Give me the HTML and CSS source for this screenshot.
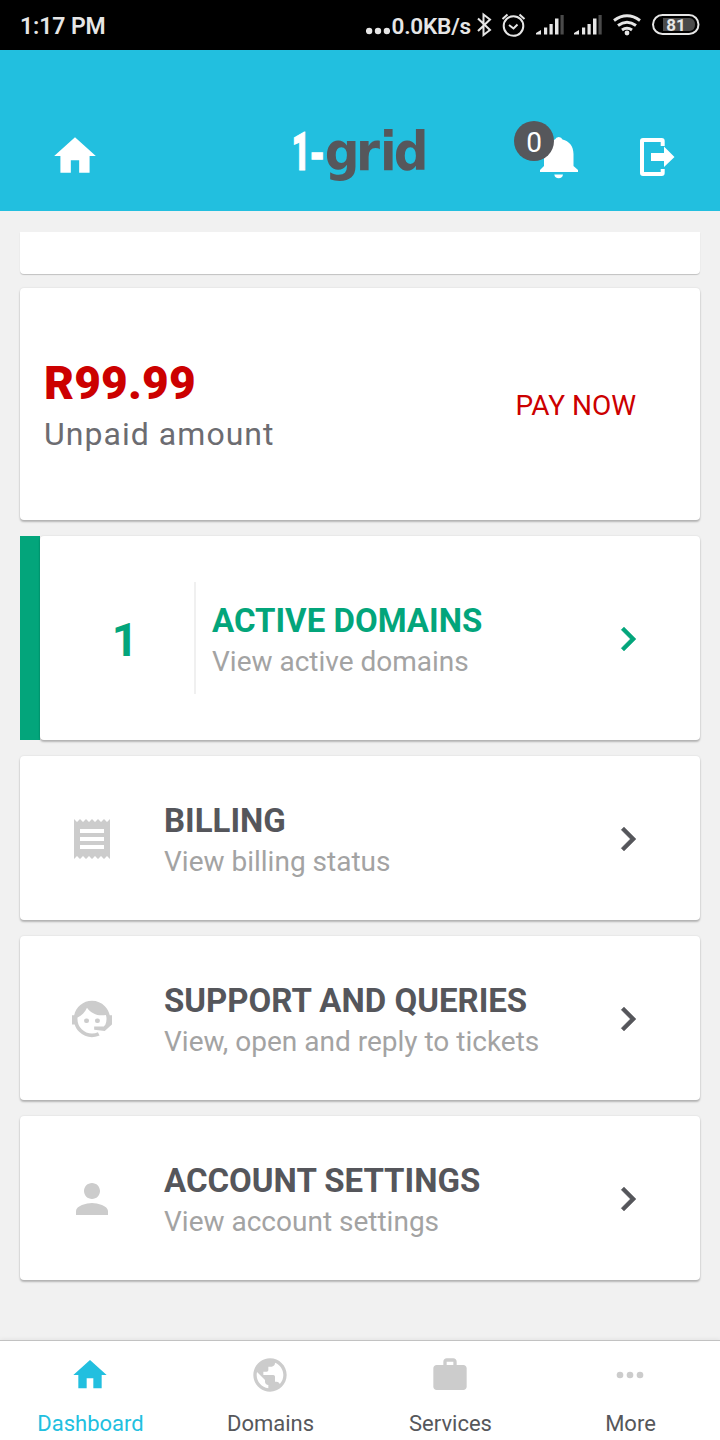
FILE: index.html
```html
<!DOCTYPE html>
<html lang="en">
<head>
<meta charset="utf-8">
<title>1-grid Dashboard</title>
<link rel="stylesheet" href="styles.css">
</head>
<body>
<div class="app">
  <div class="status">
    <span class="clock">1:17 PM</span>
    <div class="status-right">
      <svg class="dots" width="24" height="8" viewBox="0 0 24 8"><circle cx="3.1" cy="4" r="3.2"/><circle cx="12" cy="4" r="3.2"/><circle cx="20.9" cy="4" r="3.2"/></svg>
      <span class="rate">0.0KB/s</span>
      <svg class="status-icons" width="230" height="50" viewBox="470 0 230 50">
        <path class="line" d="M478 18.5l12 11.5-6.5 5V14.500l6.500 5-12 11.500"/>
        <g class="line"><circle cx="513.500" cy="26" r="9.800"/><path d="M509 25l4.500 3.500 4-4M502.500 19l5-4.500M524.500 19l-5-4.500"/></g>
        <g id="signal"><path d="M536 34.500v-1.500l5-3v4.500zM544 27.500h3.200v7H544zM549.500 24h3.200v10.500h-3.200zM555 18.500h3.500v16H555z"/><path class="dim" d="M560.500 15h3.200v19.500h-3.200z"/></g>
        <use href="#signal" x="38"/>
        <g class="wifi"><path d="M614 20.500q13-9.500 26 0M618 25.500q9-6.500 18 0M622 30q5-3.500 10 0"/></g>
        <circle cx="627" cy="33" r="2.400"/>
        <rect class="line" x="653" y="15" width="45.500" height="19" rx="9.500"/>
        <path class="dim" d="M663 18h27q5 1 5 6.500t-5 6.500h-27z"/>
        <text x="676" y="31" text-anchor="middle">81</text>
      </svg>
    </div>
  </div>

  <header class="header">
    <svg class="home" width="50" height="50" viewBox="0 0 24 24"><path d="M10 20v-6h4v6h5v-8h3L12 3 2 12h3v8z"/></svg>
    <svg class="logo" width="140" height="70" viewBox="0 0 140 70">
      <text class="logo-one" transform="translate(1.500 50) scale(.6 1)">1</text>
      <text class="logo-dash" transform="translate(20.500 49) scale(.8 1)">-</text>
      <text class="logo-dark" transform="scale(.9 1)" x="38.700 73.300 100 115.300" y="50">grid</text>
    </svg>
    <div class="alerts">
      <svg width="40" height="46" viewBox="0 0 40 46"><path d="M1 38v-2l4-4V20C5 11 10 7 16 5.500a4 4 0 0 1 7.500 0C30 7 34.500 12 34.500 20v12l4.500 4v2zM15.300 40.500h8.700a4.400 4.400 0 0 1-8.700 0z"/></svg>
      <span class="badge">0</span>
    </div>
    <svg class="exit" width="40" height="42" viewBox="0 0 40 42"><path class="frame" d="M24.700 10V5q0-1-1-1H5q-1 0-1 1v32q0 1 1 1h18.700q1 0 1-1v-4"/><path d="M13 17h13v-6.500L36.500 21 26 31v-6H13z"/></svg>
  </header>

  <main class="content">
    <div class="card peek"></div>
    <section class="card unpaid">
      <div class="sum">
        <div class="amount">R99.99</div>
        <div class="caption">Unpaid amount</div>
      </div>
      <a class="pay">PAY NOW</a>
    </section>
    <div class="active-row">
      <section class="card active">
        <div class="count">1</div>
        <div class="copy"><h2>ACTIVE DOMAINS</h2><p>View active domains</p></div>
        <svg class="chevron" width="48" height="48" viewBox="0 0 24 24"><path d="M10 6L8.590 7.410 13.170 12l-4.580 4.590L10 18l6-6z"/></svg>
      </section>
    </div>
    <section class="card item">
      <svg class="icon" width="48" height="48" viewBox="0 0 24 24"><path d="M18 17H6v-2h12v2zm0-4H6v-2h12v2zm0-4H6V7h12v2zM3 22l1.500-1.500L6 22l1.500-1.500L9 22l1.500-1.500L12 22l1.500-1.500L15 22l1.500-1.500L18 22l1.500-1.500L21 22V2l-1.500 1.500L18 2l-1.500 1.500L15 2l-1.500 1.500L12 2l-1.500 1.500L9 2 7.500 3.500 6 2 4.500 3.500 3 2v20z"/></svg>
      <div class="copy"><h2>BILLING</h2><p>View billing status</p></div>
      <svg class="chevron" width="48" height="48" viewBox="0 0 24 24"><path d="M10 6L8.590 7.410 13.170 12l-4.580 4.590L10 18l6-6z"/></svg>
    </section>
    <section class="card item">
      <svg class="icon" width="48" height="48" viewBox="0 0 24 24"><path d="M18.720,14.760C19.070,13.910 19.260,13 19.260,12C19.260,11.280 19.150,10.590 18.960,9.950C18.310,10.100 17.630,10.180 16.920,10.180C13.860,10.180 11.150,8.670 9.500,6.340C8.610,8.500 6.910,10.260 4.770,11.220C4.730,11.470 4.730,11.740 4.730,12A7.270,7.270 0 0,0 12,19.270C13.050,19.270 14.060,19.040 14.970,18.630C15.540,19.720 15.800,20.260 15.780,20.260C14.140,20.810 12.870,21.080 12,21.080C9.580,21.080 7.270,20.130 5.570,18.420C4.530,17.380 3.760,16.110 3.330,14.730H2V10.180H3.090C3.930,6.040 7.600,2.920 12,2.920C14.400,2.920 16.710,3.870 18.420,5.580C19.690,6.840 20.540,8.450 20.890,10.180H22V14.730H21.940L18.380,18L13.080,17.400V15.730H17.910L18.720,14.760M9.270,11.770A1.140,1.140 0 1,1 9.270,14.040A1.140,1.140 0 1,1 9.270,11.770M14.720,11.770A1.140,1.140 0 1,1 14.720,14.040A1.140,1.140 0 1,1 14.720,11.770Z"/></svg>
      <div class="copy"><h2>SUPPORT AND QUERIES</h2><p>View, open and reply to tickets</p></div>
      <svg class="chevron" width="48" height="48" viewBox="0 0 24 24"><path d="M10 6L8.590 7.410 13.170 12l-4.580 4.590L10 18l6-6z"/></svg>
    </section>
    <section class="card item">
      <svg class="icon" width="48" height="48" viewBox="0 0 24 24"><path d="M12 12c2.210 0 4-1.790 4-4s-1.790-4-4-4-4 1.790-4 4 1.790 4 4 4zm0 2c-2.670 0-8 1.340-8 4v2h16v-2c0-2.660-5.330-4-8-4z"/></svg>
      <div class="copy"><h2>ACCOUNT SETTINGS</h2><p>View account settings</p></div>
      <svg class="chevron" width="48" height="48" viewBox="0 0 24 24"><path d="M10 6L8.590 7.410 13.170 12l-4.580 4.590L10 18l6-6z"/></svg>
    </section>
  </main>

  <nav class="tabs">
    <a class="tab selected"><svg width="40" height="40" viewBox="0 0 24 24"><path d="M10 20v-6h4v6h5v-8h3L12 3 2 12h3v8z"/></svg><span>Dashboard</span></a>
    <a class="tab"><svg width="40" height="40" viewBox="0 0 24 24"><path d="M12 2C6.480 2 2 6.480 2 12s4.480 10 10 10 10-4.480 10-10S17.520 2 12 2zm-1 17.930c-3.950-.49-7-3.850-7-7.930 0-.62.080-1.210.21-1.790L9 15v1c0 1.100.9 2 2 2v1.930zm6.900-2.540c-.26-.81-1-1.390-1.900-1.390h-1v-3c0-.55-.45-1-1-1H8v-2h2c.55 0 1-.45 1-1V7h2c1.100 0 2-.9 2-2v-.41c2.930 1.190 5 4.060 5 7.410 0 2.080-.8 3.970-2.100 5.390z"/></svg><span>Domains</span></a>
    <a class="tab"><svg width="40" height="40" viewBox="0 0 24 24"><path d="M20 6h-4V4c0-1.110-.89-2-2-2h-4c-1.110 0-2 .89-2 2v2H4c-1.110 0-1.990.89-1.990 2L2 19c0 1.110.89 2 2 2h16c1.110 0 2-.89 2-2V8c0-1.110-.89-2-2-2zm-6 0h-4V4h4v2z"/></svg><span>Services</span></a>
    <a class="tab"><svg width="40" height="40" viewBox="0 0 24 24"><circle cx="6" cy="12" r="2"/><circle cx="12" cy="12" r="2"/><circle cx="18" cy="12" r="2"/></svg><span>More</span></a>
  </nav>
</div>
</body>
</html>
```
FILE: styles.css
```css
* { box-sizing: border-box; margin: 0; padding: 0; }
body { font-family: Roboto, "Liberation Sans", sans-serif; background: #f1f1f1; }
svg { display: block; flex: none; }
.app { width: 720px; height: 1440px; display: flex; flex-direction: column; overflow: hidden; }

.status { height: 50px; flex: none; background: #000; color: #e6e6e6; display: flex; justify-content: space-between; padding: 0 20px; font-size: 23px; font-weight: 600; line-height: 54px; }
.clock { letter-spacing: -.1px; }
.status-right { display: flex; line-height: 53px; }
.dots { margin: 27px 2px 0 0; fill: #e6e6e6; }
.rate { width: 78.500px; white-space: nowrap; font-size: 22.500px; letter-spacing: -.2px; }
.status-icons { fill: #e6e6e6; }
.line { fill: none; stroke: #e6e6e6; stroke-width: 2; }
.dim { fill: #4a4a4a; }
.wifi { fill: none; stroke: #e6e6e6; stroke-width: 3; }
.status-icons text { font-size: 17px; font-weight: 700; }

.header { height: 161px; flex: none; background: #22bfdf; display: flex; align-items: flex-start; fill: #fff; padding-left: 50px; }
.home { margin-top: 81px; }
.logo { margin: 70px 0 0 190px; overflow: visible; }
.logo-one { font: 900 54px Roboto, sans-serif; fill: #fff; stroke: #fff; stroke-width: 1; }
.logo-dash { font: 700 50px "Liberation Sans", sans-serif; fill: #fff; stroke: #fff; stroke-width: 1.500; }
.logo-dark { font: 700 54px "DejaVu Sans", sans-serif; fill: #56575b; }
.alerts { position: relative; margin: 84px 0 0 109px; }
.badge { position: absolute; left: -25px; top: -13px; width: 40px; height: 40px; border-radius: 50%; background: #56575b; color: #fff; font-size: 28px; line-height: 44px; text-align: center; }
.exit { margin: 85.500px 0 0 59px; }
.frame { fill: none; stroke: #fff; stroke-width: 4; }

.content { flex: 1; padding: 21px 20px 0; display: flex; flex-direction: column; gap: 16px; }
.card { background: #fff; border-radius: 4px; box-shadow: 0 2px 2px rgba(0,0,0,.24), 0 0 2px rgba(0,0,0,.12); display: flex; align-items: center; flex: none; }
.peek { height: 42px; border-radius: 0 0 4px 4px; box-shadow: 0 1px 1px rgba(0,0,0,.2); margin-bottom: -2px; }
.unpaid { height: 232px; padding: 0 64px 0 24px; justify-content: space-between; }
.sum { padding-top: 6px; }
.amount { color: #c00; font-size: 46px; font-weight: 900; letter-spacing: .2px; line-height: 54px; }
.caption { color: #6c6c71; font-size: 32px; letter-spacing: 1.040px; line-height: 48px; }
.pay { color: #c00; font-size: 28px; padding-top: 2px; }
.active-row { background: linear-gradient(#03a57b, #03a57b) left / 20px 100% no-repeat; padding-left: 20px; flex: none; }
.active { height: 204px; padding-right: 48px; color: #03a57b; }
.count { width: 156px; height: 112px; border-right: 2px solid #f0f0f0; padding-left: 16px; text-align: center; font-size: 46px; font-weight: 700; line-height: 116px; }
.active .copy { margin-left: 16px; }
.copy { flex: 1; padding-top: 6px; }
h2 { font-size: 33px; font-weight: 700; line-height: 42px; white-space: nowrap; }
p { font-size: 28px; line-height: 40px; color: #a3a3a3; white-space: nowrap; }
.chevron { fill: currentColor; stroke: currentColor; stroke-width: .2; margin-top: 2px; }
.item { height: 164px; padding: 0 48px; color: #55565b; }
.icon { fill: #ccc; margin: 2px 48px 0 0; }

.tabs { height: 100px; flex: none; display: grid; grid-template-columns: repeat(4, 1fr); background: #fff; border-top: 1px solid #c2c2c2; box-shadow: 0 -1px 4px rgba(0,0,0,.06); }
.tab { display: flex; flex-direction: column; align-items: center; padding-top: 14px; fill: #ccc; color: #56575b; font-size: 22px; }
.tab span { line-height: 26px; margin-top: 16px; padding-left: 1px; }
.selected { fill: #22bfdf; color: #22bfdf; }
```
